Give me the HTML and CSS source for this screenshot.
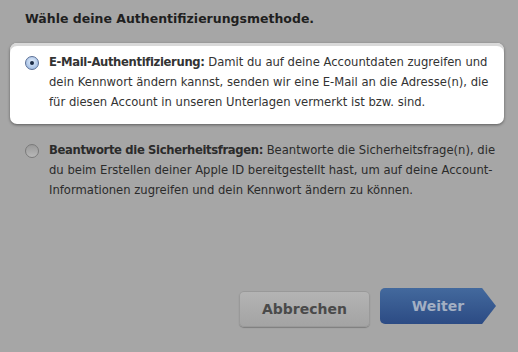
FILE: index.html
```html
<!DOCTYPE html>
<html lang="de">
<head>
    <meta charset="UTF-8">
    <title>Authentifizierung</title>
    <link rel="stylesheet" href="styles.css">
</head>
<body>
    <div class="dialog">
        <h1>Wähle deine Authentifizierungsmethode.</h1>
        <div class="option selected">
            <span class="radio checked"></span>
            <p><b>E-Mail-Authentifizierung:</b> Damit du auf deine Accountdaten zugreifen und<br>dein Kennwort ändern kannst, senden wir eine E-Mail an die Adresse(n), die<br>für diesen Account in unseren Unterlagen vermerkt ist bzw. sind.</p>
        </div>
        <div class="option">
            <span class="radio"></span>
            <p><b>Beantworte die Sicherheitsfragen:</b> Beantworte die Sicherheitsfrage(n), die<br>du beim Erstellen deiner Apple ID bereitgestellt hast, um auf deine Account-<br>Informationen zugreifen und dein Kennwort ändern zu können.</p>
        </div>
        <div class="buttons">
            <button class="cancel">Abbrechen</button>
            <button class="next">Weiter</button>
        </div>
    </div>
</body>
</html>
```

FILE: styles.css
```css
body {
    margin: 0;
    background-color: #a6a6a6;
    font-family: "DejaVu Sans", "Lucida Grande", sans-serif;
    color: #2b2b2b;
}
.dialog {
    width: 518px;
    height: 352px;
    padding: 10px 0 0 0;
    box-sizing: border-box;
    display: flex;
    flex-direction: column;
}
h1 {
    margin: 0 0 15px 25px;
    font-size: 12.5px;
    line-height: 18px;
    font-weight: bold;
    color: #1f1f1f;
}
.option {
    display: flex;
    align-items: flex-start;
    margin: 0 14px 0 10px;
    padding: 9px 0 12px 15px;
}
.option p {
    margin: 0;
    font-size: 11.6px;
    line-height: 20px;
    white-space: nowrap;
}
.option b {
    font-weight: bold;
    letter-spacing: -0.35px;
}
.option.selected {
    background-color: #fff;
    border-radius: 7px;
    box-shadow: 0 1px 3px rgba(0, 0, 0, 0.45), inset 0 3px 0 #d9d9d9;
    color: #333;
}
.option + .option {
    margin-top: 16px;
    padding-top: 0;
}
.radio {
    flex: none;
    width: 12px;
    height: 12px;
    margin: 4px 10px 0 0;
    border-radius: 50%;
    border: 1px solid #7a7a7a;
    background: linear-gradient(#9a9a9a, #b8b8b8);
    box-sizing: content-box;
    position: relative;
}
.radio.checked {
    border-color: #5a6f96;
    background: radial-gradient(circle at 50% 40%, #e4eefb, #8fb0dd);
}
.radio.checked::after {
    content: "";
    position: absolute;
    left: 4px;
    top: 4px;
    width: 4px;
    height: 4px;
    border-radius: 50%;
    background-color: #1a2a44;
}
.buttons {
    margin-top: auto;
    margin-bottom: 25px;
    display: flex;
    justify-content: flex-end;
    align-items: flex-start;
    padding-right: 22px;
}
.buttons button {
    font-family: "DejaVu Sans", "Lucida Grande", sans-serif;
    font-size: 14px;
    font-weight: bold;
    height: 36px;
    border: none;
    cursor: pointer;
}
.cancel {
    width: 131px;
    margin-top: 3px;
    border-radius: 5px;
    color: #4a4a4a;
    background: linear-gradient(#b4b4b4, #a3a3a3);
    box-shadow: inset 0 0 0 1px #999, 0 1px 1px rgba(0, 0, 0, 0.25);
}
.next {
    width: 116px;
    margin-left: 10px;
    padding: 0;
    color: #a3afc3;
    background: linear-gradient(#43699d, #2c4b84);
    border-radius: 5px 0 0 5px;
    clip-path: polygon(0 0, 88% 0, 100% 50%, 88% 100%, 0 100%);
}
```
